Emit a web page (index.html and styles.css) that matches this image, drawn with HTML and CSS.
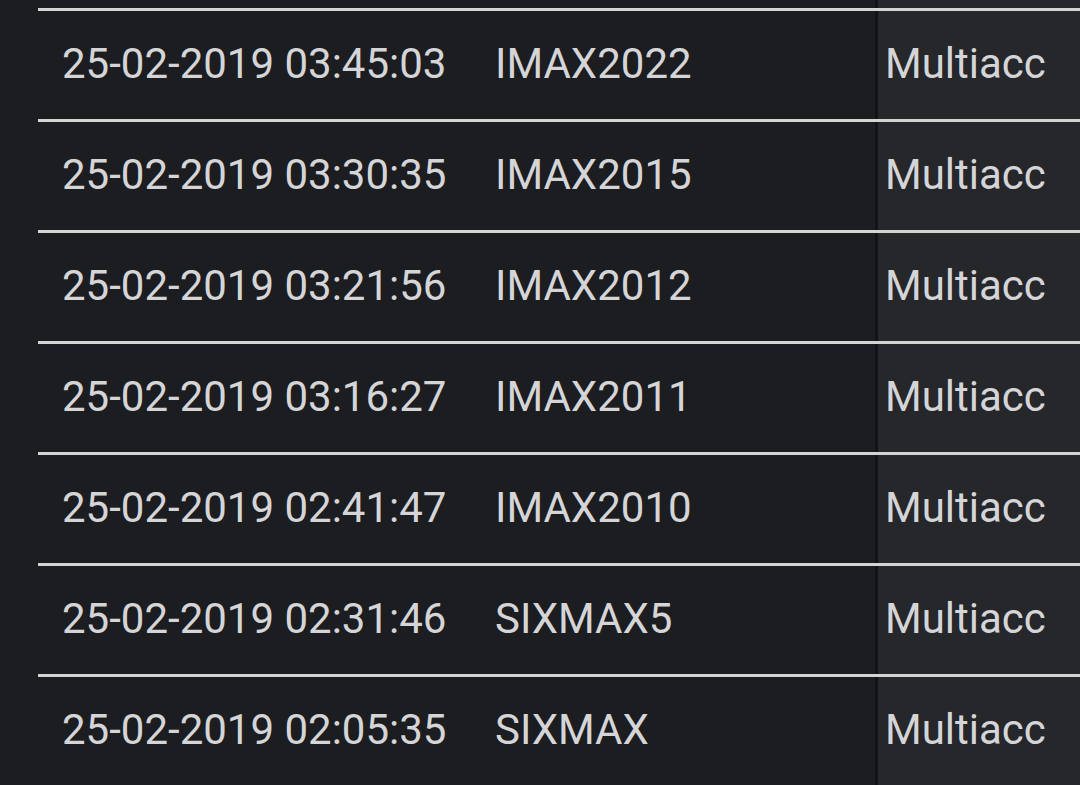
FILE: index.html
```html
<!DOCTYPE html>
<html>
<head>
<meta charset="utf-8">
<link rel="stylesheet" href="styles.css">
</head>
<body>
<div class="list">
  <div class="row stub"><div class="cell"></div><div class="cell"></div><div class="cell type"></div></div>
  <div class="row"><div class="cell date">25-02-2019 03:45:03</div><div class="cell name">IMAX2022</div><div class="cell type">Multiacc</div></div>
  <div class="row"><div class="cell date">25-02-2019 03:30:35</div><div class="cell name">IMAX2015</div><div class="cell type">Multiacc</div></div>
  <div class="row"><div class="cell date">25-02-2019 03:21:56</div><div class="cell name">IMAX2012</div><div class="cell type">Multiacc</div></div>
  <div class="row"><div class="cell date">25-02-2019 03:16:27</div><div class="cell name">IMAX2011</div><div class="cell type">Multiacc</div></div>
  <div class="row"><div class="cell date">25-02-2019 02:41:47</div><div class="cell name">IMAX2010</div><div class="cell type">Multiacc</div></div>
  <div class="row"><div class="cell date">25-02-2019 02:31:46</div><div class="cell name">SIXMAX5</div><div class="cell type">Multiacc</div></div>
  <div class="row"><div class="cell date">25-02-2019 02:05:35</div><div class="cell name">SIXMAX</div><div class="cell type">Multiacc</div></div>
</div>
</body>
</html>
```
FILE: styles.css
```css
html, body {
  margin: 0;
  padding: 0;
  background: #1c1d21;
  overflow: hidden;
  height: 785px;
}
.list {
  display: flex;
  flex-direction: column;
  padding-left: 38px;
}
.row {
  display: grid;
  grid-template-columns: 457px 380px 1fr;
  height: 108px;
  border-top: 3px solid #d4d4d4;
  font-family: Roboto, "Noto Sans", sans-serif;
  font-size: 42px;
  color: #d5d5d7;
}
.row.stub {
  height: 8px;
  border-top: none;
}
.cell {
  display: flex;
  align-items: center;
  white-space: nowrap;
  padding-bottom: 3px;
}
.row.stub .cell {
  padding-bottom: 0;
}
.date {
  padding-left: 24px;
}
.type {
  background: #25272b;
  border-left: 3px solid #121316;
  padding-left: 7px;
}
```
